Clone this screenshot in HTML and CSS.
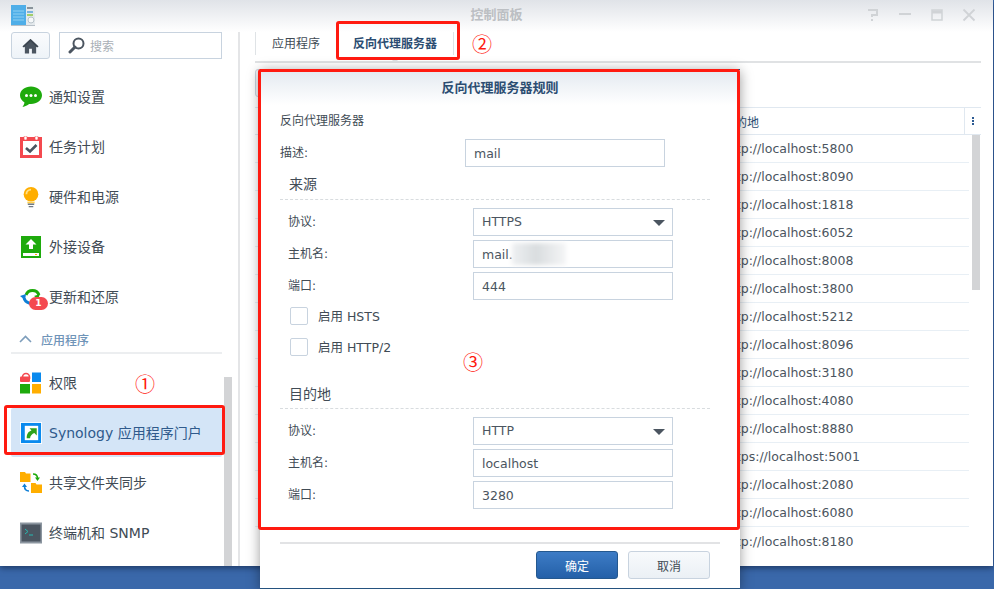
FILE: index.html
```html
<!DOCTYPE html>
<html lang="zh-CN">
<head>
<meta charset="utf-8">
<title>控制面板</title>
<link rel="stylesheet" href="styles.css">
</head>
<body>
<div class="desktop">
  <div class="window">
    <header class="titlebar">
      <svg class="applogo" viewBox="0 0 24 21" width="24" height="21">
        <rect x="0" y="0" width="15" height="20" fill="#4faee8"/>
        <rect x="15" y="0" width="9" height="20" fill="#e4e9ec"/>
        <path d="M2 6h11M2 9h11M2 12h11M2 15h11" stroke="#8fd0f2" stroke-width="1"/>
        <path d="M16 3h6" stroke="#6b7680" stroke-width="1.5"/>
        <path d="M16 7h6" stroke="#5aa0d8" stroke-width="1.5"/>
        <path d="M16 10h6" stroke="#8cc63f" stroke-width="1.5"/>
        <circle cx="20" cy="15" r="3" fill="#f6f8f9" stroke="#b9c3ca"/>
        <rect x="0" y="20" width="24" height="1" fill="#b8c0c8"/>
      </svg>
      <div class="wintitle">控制面板</div>
      <div class="winctrls">
        <svg viewBox="0 0 14 14" width="14" height="14"><path d="M2 2h9v5H6v2M6 11v2" fill="none" stroke="#d0d3d6" stroke-width="2"/></svg>
        <svg viewBox="0 0 14 14" width="14" height="14"><path d="M1 6h12" stroke="#d0d3d6" stroke-width="2"/></svg>
        <svg viewBox="0 0 14 14" width="14" height="14"><path d="M2 2h10v10H2z" fill="none" stroke="#d0d3d6" stroke-width="1.5"/><path d="M2 4h10" stroke="#d0d3d6" stroke-width="3"/></svg>
        <svg viewBox="0 0 14 14" width="14" height="14"><path d="M1.5 1.5l11 11M12.5 1.5l-11 11" stroke="#d0d3d6" stroke-width="1.8"/></svg>
      </div>
    </header>
    <div class="content">
      <aside class="sidebar">
        <div class="nav">
          <div class="navtools">
            <button class="homebtn" type="button">
              <svg viewBox="0 0 18 17" width="17" height="16"><path d="M9 1L0.5 9h2.5v7.500h4.500v-5h3v5h4.500V9h2.500z" fill="#4b5560"/><path d="M9 1L0.5 9 2 10 9 3.500 16 10l1.500-1z" fill="#3d4650"/></svg>
            </button>
            <div class="searchbox">
              <svg viewBox="0 0 17 17" width="17" height="17"><circle cx="10.500" cy="6.500" r="5" fill="none" stroke="#4b5560" stroke-width="2"/><path d="M7 10l-5 5" stroke="#4b5560" stroke-width="3" stroke-linecap="round"/></svg>
              <span>搜索</span>
            </div>
          </div>
          <ul class="navlist">
            <li class="navitem">
              <svg class="navicon" viewBox="0 0 22 22"><path d="M11 0.500C5 .500 0 4.400 0 9.300c0 3 1.800 5.500 4.500 7.100-.3 1.800-1.200 3.300-2 4.600 2.500-.4 5-1.600 6.600-3 .6.100 1.200.1 1.900.1 6 0 11-3.900 11-8.800S17 .5 11 .5z" fill="#1eaa0c"/><circle cx="6.500" cy="9.500" r="1.500" fill="#fff"/><circle cx="11" cy="9.500" r="1.500" fill="#fff"/><circle cx="15.500" cy="9.500" r="1.500" fill="#fff"/></svg>
              <span>通知设置</span>
            </li>
            <li class="navitem">
              <svg class="navicon" viewBox="0 0 22 22"><rect x="1.500" y="3.500" width="19" height="17" fill="#fff" stroke="#f4494f" stroke-width="3"/><rect x="0" y="1" width="22" height="4" fill="#f4494f"/><rect x="4" y="0" width="3" height="4" rx="1" fill="#fff" stroke="#f4494f" stroke-width=".6"/><rect x="15" y="0" width="3" height="4" rx="1" fill="#fff" stroke="#f4494f" stroke-width=".6"/><path d="M6 12l4 3.500 6.500-6.500" fill="none" stroke="#4b5560" stroke-width="2.600"/></svg>
              <span>任务计划</span>
            </li>
            <li class="navitem">
              <svg class="navicon" viewBox="0 0 22 24"><circle cx="11" cy="9" r="8" fill="#ffae00"/><path d="M6 9a5 5 0 0 1 5-5" fill="none" stroke="#ffe08a" stroke-width="2"/><path d="M7 17h8v2H7z" fill="#ffcf4d"/><path d="M7.500 20h7M8.500 22.500h5" stroke="#6f7a85" stroke-width="1.600"/></svg>
              <span>硬件和电源</span>
            </li>
            <li class="navitem">
              <svg class="navicon" viewBox="0 0 22 22"><rect x="1" y="0" width="20" height="22" fill="#1eaa0c"/><path d="M11 3l5.500 5.500h-3.500v4.500H9V8.500H5.500z" fill="#fff"/><rect x="3" y="17" width="16" height="3" fill="#fff"/><rect x="15" y="18" width="2" height="1" fill="#ffae00"/></svg>
              <span>外接设备</span>
            </li>
            <li class="navitem">
              <svg class="navicon" viewBox="0 0 22 22"><path d="M6 9a7 7 0 0 1 13 0" fill="none" stroke="#1eaa0c" stroke-width="3"/><path d="M20 8l-2 5-4-3z" fill="#1eaa0c"/><path d="M16 15a7 7 0 0 1-12-3" fill="none" stroke="#0f7fd6" stroke-width="3"/><path d="M0 10l6-2-1 6z" fill="#0f7fd6"/></svg>
              <span>更新和还原</span>
              <b class="badge">1</b>
            </li>
          </ul>
          <div class="navsection">
            <svg viewBox="0 0 13 8" width="13" height="8"><path d="M1 7l5.500-5.500L12 7" fill="none" stroke="#7d9dbb" stroke-width="1.600"/></svg>
            <span>应用程序</span>
          </div>
          <ul class="navlist navlist-apps">
            <li class="navitem">
              <svg class="navicon" viewBox="0 0 22 22"><path d="M2.500 5a3.500 3.500 0 0 1 7 0v2" fill="none" stroke="#f4494f" stroke-width="1.600"/><rect x="0" y="4.500" width="10" height="5.500" fill="#f4494f" rx="1"/><rect x="12" y="0.500" width="9" height="9.500" fill="#0a8aee"/><rect x="0" y="12" width="10" height="9.500" fill="#1eaa0c"/><rect x="12" y="12" width="9" height="9.500" fill="#ffae00"/></svg>
              <span>权限</span>
            </li>
            <li class="navitem navitem-active">
              <svg class="navicon" viewBox="0 0 23 23"><rect x="0" y="0" width="23" height="23" fill="#fff"/><rect x="1" y="1" width="21" height="21" fill="#0a8aee"/><rect x="5" y="4" width="14" height="15" fill="#fff"/><path d="M7 17c0-5 2-7 5-8l-2-2.500h7.500V14L15 11.500c-2.500 1-4 2.500-4.500 5.500z" fill="#2fa21c"/></svg>
              <span>Synology 应用程序门户</span>
            </li>
            <li class="navitem">
              <svg class="navicon" viewBox="0 0 22 22"><path d="M0 0h5l1 1.500h4.500V10H0z" fill="#ffae00"/><path d="M11 11h4.500l1 1.500H22V21H11z" fill="#ffae00"/><path d="M13 2c3 0 4.500 1.500 4.500 4.500" fill="none" stroke="#1eaa0c" stroke-width="1.600"/><path d="M15 5.500h5L17.500 9z" fill="#1eaa0c"/><path d="M9 19c-3 0-4.500-1.500-4.500-5" fill="none" stroke="#0f7fd6" stroke-width="1.600"/><path d="M2 15h5l-2.500-3.500z" fill="#0f7fd6"/></svg>
              <span>共享文件夹同步</span>
            </li>
            <li class="navitem">
              <svg class="navicon" viewBox="0 0 22 20"><rect x="0.500" y="0.500" width="21" height="19" fill="#4b5560" stroke="#8c96a0" stroke-width="2"/><path d="M5 6l3 2.500L5 11" fill="none" stroke="#26b8b0" stroke-width="1"/><path d="M9 12h4" stroke="#26b8b0" stroke-width="1"/></svg>
              <span>终端机和 SNMP</span>
            </li>
          </ul>
        </div>
        <div class="navscroll"></div>
      </aside>
      <main class="main">
        <nav class="tabs">
          <div class="tab">应用程序</div>
          <div class="tab tab-active">反向代理服务器</div>
        </nav>
        <div class="toolbar"><button class="toolbtn" type="button"></button></div>
        <section class="grid">
          <div class="gridhead">
            <div class="gridsrc"></div>
            <div class="griddst">目的地</div>
            <div class="gridmenu"><i></i><i></i><i></i></div>
          </div>
          <div class="gridbody">
            <div class="gridrows">
              <div class="gridrow"><div class="gridsrc"></div><div>http://localhost:5800</div></div>
              <div class="gridrow"><div class="gridsrc"></div><div>http://localhost:8090</div></div>
              <div class="gridrow"><div class="gridsrc"></div><div>http://localhost:1818</div></div>
              <div class="gridrow"><div class="gridsrc"></div><div>http://localhost:6052</div></div>
              <div class="gridrow"><div class="gridsrc"></div><div>http://localhost:8008</div></div>
              <div class="gridrow"><div class="gridsrc"></div><div>http://localhost:3800</div></div>
              <div class="gridrow"><div class="gridsrc"></div><div>http://localhost:5212</div></div>
              <div class="gridrow"><div class="gridsrc"></div><div>http://localhost:8096</div></div>
              <div class="gridrow"><div class="gridsrc"></div><div>http://localhost:3180</div></div>
              <div class="gridrow"><div class="gridsrc"></div><div>http://localhost:4080</div></div>
              <div class="gridrow"><div class="gridsrc"></div><div>http://localhost:8880</div></div>
              <div class="gridrow"><div class="gridsrc"></div><div>https://localhost:5001</div></div>
              <div class="gridrow"><div class="gridsrc"></div><div>http://localhost:2080</div></div>
              <div class="gridrow"><div class="gridsrc"></div><div>http://localhost:6080</div></div>
              <div class="gridrow"><div class="gridsrc"></div><div>http://localhost:8180</div></div>
            </div>
            <div class="gridscroll"></div>
          </div>
        </section>
      </main>
    </div>
  </div>

  <div class="modal">
    <div class="modaltitle">反向代理服务器规则</div>
    <div class="modalbody">
      <div class="modalheading">反向代理服务器</div>
      <div class="row row-desc"><label>描述:</label><div class="field">mail</div></div>

      <div class="group">来源</div>
      <div class="rows">
        <div class="row"><label>协议:</label><div class="field field-select">HTTPS<i class="caret"></i></div></div>
        <div class="row"><label>主机名:</label><div class="field">mail.<i class="smudge"></i></div></div>
        <div class="row"><label>端口:</label><div class="field">444</div></div>
      </div>
      <div class="check check-first"><i class="box"></i><span>启用 HSTS</span></div>
      <div class="check"><i class="box"></i><span>启用 HTTP/2</span></div>

      <div class="group group-dest">目的地</div>
      <div class="rows">
        <div class="row"><label>协议:</label><div class="field field-select">HTTP<i class="caret"></i></div></div>
        <div class="row"><label>主机名:</label><div class="field">localhost</div></div>
        <div class="row"><label>端口:</label><div class="field">3280</div></div>
      </div>
    </div>
    <div class="modalfoot">
      <button class="btn btn-primary" type="button">确定</button>
      <button class="btn" type="button">取消</button>
    </div>
  </div>

  <div class="mark mark-one"></div>
  <div class="mark mark-two"></div>
  <div class="mark mark-three"></div>
  <div class="num num-one">①</div>
  <div class="num num-two">②</div>
  <div class="num num-three">③</div>
</div>
</body>
</html>
```

FILE: styles.css
```css
* { box-sizing: border-box; }
html, body { margin: 0; padding: 0; }
body {
  font-family: "DejaVu Sans", "Noto Sans CJK SC", sans-serif;
  font-size: 12px;
  color: #414b55;
}
ul { list-style: none; margin: 0; padding: 0; }
button { font: inherit; }

.desktop {
  position: relative;
  width: 994px;
  height: 589px;
  overflow: hidden;
  background: #3a68aa;
}
.window {
  width: 993px;
  height: 566px;
  display: flex;
  flex-direction: column;
  background: #fff;
  box-shadow: 0 2px 6px rgba(10, 25, 55, .6);
}

/* title bar */
.titlebar {
  flex: none;
  height: 32px;
  display: flex;
  align-items: flex-start;
  position: relative;
  padding: 5px 0 0 11px;
  background: linear-gradient(#e0e3e8, #fff);
}
.applogo { display: block; }
.wintitle {
  position: absolute;
  left: 0;
  right: 0;
  top: 5px;
  text-align: center;
  font-size: 13px;
  line-height: 19px;
  font-weight: 700;
  color: #bcbfc3;
}
.winctrls {
  margin-left: auto;
  margin-right: 17px;
  display: flex;
  gap: 18px;
  padding-top: 3px;
}

.content { flex: 1; display: flex; min-height: 0; }

/* sidebar */
.sidebar {
  flex: none;
  width: 240px;
  padding-left: 11px;
  display: flex;
  border-right: 2px solid #e4e5e7;
}
.nav { width: 211px; }
.navtools { display: flex; gap: 9px; height: 27px; margin-bottom: 13px; }
.homebtn {
  width: 39px;
  height: 27px;
  padding: 0;
  display: flex;
  align-items: center;
  justify-content: center;
  border: 1px solid #c8d3df;
  border-radius: 3px;
  background: linear-gradient(#fafbfd, #eef3f8);
}
.searchbox {
  width: 163px;
  height: 27px;
  display: flex;
  align-items: center;
  gap: 5px;
  padding-left: 8px;
  border: 1px solid #c8d3df;
  color: #a9afb6;
  font-size: 12px;
}
.navitem {
  position: relative;
  height: 50px;
  display: flex;
  align-items: center;
  gap: 7px;
  padding-left: 9px;
  font-size: 14px;
  color: #414b55;
}
.navitem span { margin-bottom: 2px; }
.navicon { flex: none; width: 22px; height: 22px; }
.navitem-active {
  background: #d4e5f7;
  color: #2f5a8c;
  height: 49px;
  margin-bottom: 1px;
  border-radius: 2px;
}
.badge {
  position: absolute;
  left: 18px;
  top: 25px;
  min-width: 19px;
  height: 13px;
  border-radius: 7px;
  background: #f4494f;
  color: #fff;
  font-size: 9px;
  line-height: 13px;
  text-align: center;
}
.navsection {
  height: 32px;
  display: flex;
  align-items: center;
  gap: 9px;
  padding: 4px 0 0 8px;
  border-bottom: 2px solid #eceef0;
  color: #6f94b8;
  font-size: 12px;
  font-weight: 500;
}
.navlist-apps { margin-top: 4px; }
.navscroll {
  align-self: flex-end;
  flex: none;
  width: 8px;
  height: 189px;
  margin-left: 2px;
  background: #d3d4d6;
}

/* main */
.main { flex: 1; min-width: 0; padding: 0 12px 0 15px; display: flex; flex-direction: column; }
.tabs {
  flex: none;
  height: 31px;
  display: flex;
  border-bottom: 2px solid #e0e2e4;
  position: relative;
}
.tab {
  height: 23px;
  padding: 0 16px;
  line-height: 24px;
  font-size: 12px;
  border-left: 1px solid #dfe3e6;
  color: #414b55;
}
.tab-active {
  position: relative;
  font-weight: 700;
  color: #2c4d72;
  padding: 0 16px 0 17px;
  border-left: 0;
  border-right: 1px solid #dfe3e6;
}
.tab-active::after {
  content: "";
  position: absolute;
  left: 50%;
  bottom: -8px;
  margin-left: -5px;
  border: 5px solid transparent;
  border-top: 0;
  border-bottom-color: #e0e2e4;
}
.toolbar { flex: none; height: 44px; padding-top: 6px; }
.toolbtn {
  display: block;
  width: 30px;
  height: 28px;
  padding: 0;
  border: 1px solid #c8d3df;
  border-radius: 3px;
  background: #f2f5f8;
}
.grid { flex: 1; min-height: 0; }
.gridhead {
  height: 28px;
  display: flex;
  align-items: center;
  border-top: 1px solid #e0e8f0;
  border-bottom: 1px solid #e0e8f0;
  color: #2c4d72;
}
.gridsrc { flex: none; width: 468px; }
.griddst { flex: 1; }
.gridmenu {
  flex: none;
  width: 17px;
  height: 100%;
  display: flex;
  flex-direction: column;
  align-items: center;
  justify-content: center;
  gap: 1px;
  border-left: 1px solid #e0e8f0;
}
.gridmenu i { width: 2px; height: 2px; background: #2c5a92; }
.gridbody { display: flex; gap: 3px; }
.gridrows { width: 714px; }
.gridrow {
  height: 28px;
  display: flex;
  align-items: center;
  border-bottom: 1px solid #e8eff5;
  font-size: 12.500px;
  color: #4b5560;
}
.gridrow:last-child { border-bottom: 0; }
.gridscroll { flex: none; width: 8px; height: 155px; background: #d3d4d6; }

/* modal */
.modal {
  position: absolute;
  left: 260px;
  top: 69px;
  width: 480px;
  height: 520px;
  display: flex;
  flex-direction: column;
  background: #fff;
  border-top: 1px solid #24527f;
  border-bottom: 1px solid #24527f;
  box-shadow: 0 2px 12px rgba(0, 0, 0, .4);
}
.modaltitle {
  flex: none;
  height: 35px;
  line-height: 35px;
  text-align: center;
  font-weight: 700;
  font-size: 13px;
  color: #2c4d72;
  background: linear-gradient(#e3e9f0, #fff);
}
.modalbody { flex: none; padding: 6px 30px 0 20px; }
.modalheading { height: 18px; line-height: 20px; font-size: 12px; color: #414b55; }
.row {
  height: 28px;
  display: flex;
  align-items: center;
}
.row label { flex: none; width: 193px; padding: 0 0 4px 8px; font-size: 12px; }
.row-desc { margin-top: 10px; }
.row-desc label { width: 185px; padding-left: 0; }
.field {
  position: relative;
  width: 200px;
  height: 28px;
  padding: 0 8px;
  border: 1px solid #c8d3df;
  line-height: 28px;
  font-size: 12.500px;
  color: #4b5560;
}
.field-select { line-height: 26px; }
.caret {
  position: absolute;
  right: 7px;
  top: 11px;
  border: 6px solid transparent;
  border-top: 6px solid #4b5560;
  border-bottom: 0;
}
.smudge {
  position: absolute;
  left: 38px;
  top: 2px;
  width: 54px;
  height: 22px;
  background: linear-gradient(90deg, #eef0f2, #d9dddf 45%, #e6e8ea 70%, #f4f5f6);
  filter: blur(2px);
}
.group {
  height: 24px;
  margin-top: 9px;
  padding-left: 9px;
  line-height: 16px;
  font-size: 14px;
  color: #414b55;
  border-bottom: 1px dashed #d8dcdf;
  width: 430px;
}
.group-dest { margin-top: 29px; line-height: 18px; }
.rows { display: flex; flex-direction: column; gap: 4px; margin-top: 8px; }
.check {
  height: 18px;
  margin-top: 13px;
  display: flex;
  align-items: center;
  gap: 10px;
  padding-left: 10px;
  font-size: 12.500px;
}
.check span { margin-bottom: 2px; }
.check-first { margin-top: 7px; }
.box { flex: none; width: 18px; height: 18px; border: 1px solid #c8d3df; border-radius: 2px; background: #fff; }
.modalfoot {
  margin: auto 20px 0;
  height: 46px;
  padding: 7px 10px 0 0;
  display: flex;
  justify-content: flex-end;
  gap: 10px;
  border-top: 2px solid #e2e3e5;
}
.btn {
  width: 82px;
  height: 28px;
  padding: 0;
  border: 1px solid #c8d3df;
  border-radius: 3px;
  background: linear-gradient(#f8fafc, #ebf0f5);
  color: #414b55;
  font-size: 12px;
}
.btn-primary {
  border-color: #24588f;
  background: linear-gradient(#3d7cc6, #2460a8);
  color: #fff;
}

/* annotations */
.mark {
  position: absolute;
  border: 3px solid #ff1a10;
  border-radius: 3px;
}
.mark-one { left: 4px; top: 405px; width: 221px; height: 50px; }
.mark-two { left: 336px; top: 21px; width: 124px; height: 39px; }
.mark-three { left: 258px; top: 69px; width: 482px; height: 461px; }
.num {
  position: absolute;
  width: 22px;
  height: 22px;
  line-height: 22px;
  text-align: center;
  font-size: 20px;
  color: #ff1a10;
  font-family: "Noto Sans CJK SC", sans-serif;
}
.num-one { left: 134px; top: 373px; }
.num-two { left: 471px; top: 33px; }
.num-three { left: 462px; top: 351px; }
```
